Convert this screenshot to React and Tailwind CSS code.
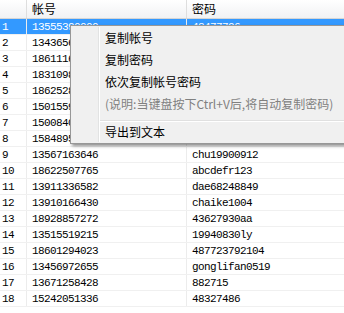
import React from "react";

const rows = [
  ["1", "13555390000", "48477796"],
  ["2", "13436567215", ""],
  ["3", "18611166203", ""],
  ["4", "18310985537", ""],
  ["5", "18625286114", ""],
  ["6", "15015595821", ""],
  ["7", "15008405326", ""],
  ["8", "15848957702", ""],
  ["9", "13567163646", "chu19900912"],
  ["10", "18622507765", "abcdefr123"],
  ["11", "13911336582", "dae68248849"],
  ["12", "13910166430", "chaike1004"],
  ["13", "18928857272", "43627930aa"],
  ["14", "13515519215", "19940830ly"],
  ["15", "18601294023", "487723792104"],
  ["16", "13456972655", "gonglifan0519"],
  ["17", "13671258428", "882715"],
  ["18", "15242051336", "48327486"],
];

const menuItems = [
  { label: "复制帐号" },
  { label: "复制密码" },
  { label: "依次复制帐号密码" },
  { label: "(说明:当键盘按下Ctrl+V后,将自动复制密码)", disabled: true },
];

function Row({ no, account, password, selected }) {
  return (
    <div
      className={
        "flex h-[16px] border-b border-[#f0f0f0] text-[11px] tracking-[-0.6px] leading-none " +
        (selected ? "bg-[#3399ff] text-white" : "bg-white text-black")
      }
    >
      <div className="w-[27px] border-r border-[#ececec] pl-[2px] pt-[1px] flex items-center">{no}</div>
      <div className="w-[160px] border-r border-[#ececec] pl-[5px] pt-[1px] flex items-center">{account}</div>
      <div className="flex-1 pl-[5px] pt-[1px] flex items-center">{password}</div>
    </div>
  );
}

export default function App() {
  return (
    <div className="relative w-[344px] h-[313px] overflow-hidden bg-white font-['Liberation_Mono',monospace]">
      {/* header */}
      <div className="flex h-[19px] border-b border-[#d5d5d5] bg-gradient-to-b from-white to-[#f1f2f4] text-[12px] text-black font-['Noto_Sans_CJK_SC','Noto_Sans',sans-serif] leading-none">
        <div className="w-[27px] border-r border-[#dedede]"></div>
        <div className="w-[160px] border-r border-[#dedede] pl-[5px] flex items-center">帐号</div>
        <div className="flex-1 pl-[5px] flex items-center">密码</div>
      </div>

      {/* rows */}
      <div className="flex flex-col">
        {rows.map((r, i) => (
          <Row key={r[0]} no={r[0]} account={r[1]} password={r[2]} selected={i === 0} />
        ))}
      </div>

      {/* context menu */}
      <div className="absolute left-[70px] top-[25px] w-[290px] border border-[#979797] bg-[#f0f0f0] p-[1px] shadow-[2px_2px_3px_rgba(0,0,0,0.45)] font-['Noto_Sans_CJK_SC','Noto_Sans',sans-serif] text-[12px] leading-none">
        <div className="flex">
          <div className="w-[27px] border-r border-[#e2e3e3]"></div>
          <div className="flex-1 border-l border-white">
            {menuItems.map((m) => (
              <div
                key={m.label}
                className={
                  "h-[22px] pl-[5px] flex items-center whitespace-nowrap " +
                  (m.disabled ? "text-[#808080]" : "text-black")
                }
              >
                {m.label}
              </div>
            ))}
            <div className="h-[7px] pt-[5px]">
              <div className="border-t border-[#e0e0e0]"></div>
              <div className="border-t border-white"></div>
            </div>
            <div className="h-[20px] pl-[5px] flex items-center text-black">导出到文本</div>
          </div>
        </div>
      </div>
    </div>
  );
}
